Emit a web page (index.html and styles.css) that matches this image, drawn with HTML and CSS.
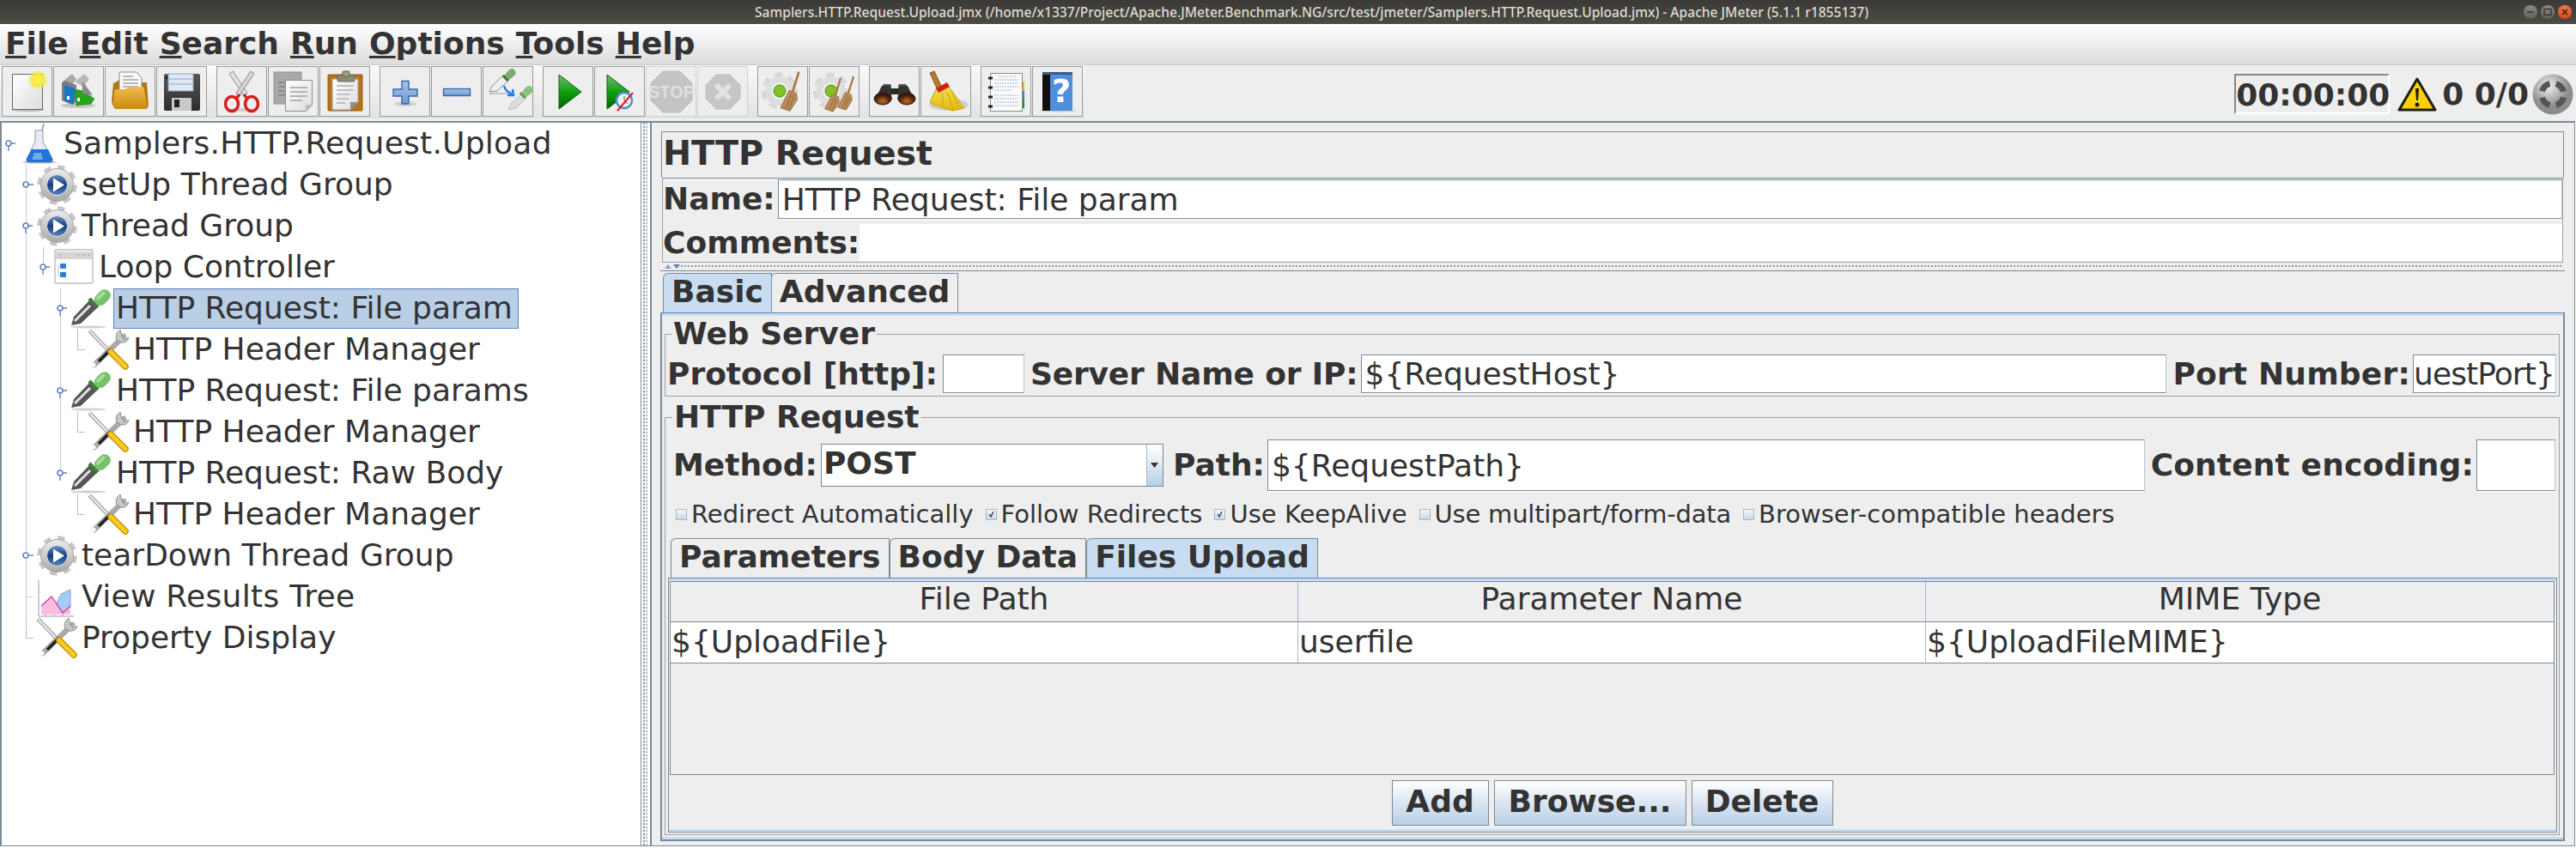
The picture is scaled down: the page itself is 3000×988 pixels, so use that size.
FILE: index.html
```html
<!DOCTYPE html>
<html lang="en">
<head>
  <meta charset="UTF-8">
  <title>Apache JMeter</title>
  <link rel="stylesheet" href="styles.css">
</head>
<body>
  <svg class="defs" width="0" height="0">
    <defs>
      <linearGradient id="gSilver" x1="0" y1="0" x2="0" y2="1"><stop offset="0" stop-color="#ececec"/><stop offset="1" stop-color="#a9a9a9"/></linearGradient>
      <linearGradient id="gNavy" x1="0" y1="0" x2="0" y2="1"><stop offset="0" stop-color="#6f93c4"/><stop offset=".5" stop-color="#123f7c"/><stop offset="1" stop-color="#5c86bd"/></linearGradient>
      <linearGradient id="gGreen" x1="0" y1="0" x2="0" y2="1"><stop offset="0" stop-color="#78b878"/><stop offset=".5" stop-color="#0fa00f"/><stop offset="1" stop-color="#046004"/></linearGradient>
      <linearGradient id="gPage" x1="0" y1="0" x2="1" y2="1"><stop offset="0" stop-color="#fff"/><stop offset="1" stop-color="#dcdcdc"/></linearGradient>
      <linearGradient id="gFolder" x1="0" y1="0" x2="0" y2="1"><stop offset="0" stop-color="#f2bb4c"/><stop offset="1" stop-color="#c98a12"/></linearGradient>
      <linearGradient id="gFloppy" x1="0" y1="0" x2="0" y2="1"><stop offset="0" stop-color="#555"/><stop offset="1" stop-color="#2e2e2e"/></linearGradient>
      <linearGradient id="gPlus" x1="0" y1="0" x2="0" y2="1"><stop offset="0" stop-color="#a8c6ea"/><stop offset="1" stop-color="#6d9ad2"/></linearGradient>
      <linearGradient id="gBristle" x1="0" y1="0" x2="0" y2="1"><stop offset="0" stop-color="#f7e25a"/><stop offset="1" stop-color="#e0b90e"/></linearGradient>
      <radialGradient id="gGlow"><stop offset="0" stop-color="#fff16a"/><stop offset=".55" stop-color="#f5e83c"/><stop offset="1" stop-color="#f5e83c" stop-opacity="0"/></radialGradient>
      <radialGradient id="gBall" cx=".4" cy=".3"><stop offset="0" stop-color="#f0f0f0"/><stop offset="1" stop-color="#8c8c8c"/></radialGradient>
      <radialGradient id="gLens" cx=".5" cy=".7"><stop offset="0" stop-color="#c86a24"/><stop offset="1" stop-color="#3a1a08"/></radialGradient>
    </defs>

    <symbol id="i-knob-open" viewBox="0 0 20 48">
      <path d="M10 27v6M13 24h5" fill="none" stroke="#6382bf" stroke-width="1.4"/>
      <circle cx="10" cy="24" r="3" fill="#fff" stroke="#6382bf" stroke-width="1.6"/>
    </symbol>
    <symbol id="i-knob-closed" viewBox="0 0 20 48">
      <path d="M13 24h6" fill="none" stroke="#6382bf" stroke-width="1.4"/>
      <circle cx="10" cy="24" r="3" fill="#fff" stroke="#6382bf" stroke-width="1.6"/>
    </symbol>

    <symbol id="i-flask" viewBox="0 0 47 47">
      <ellipse cx="23" cy="45" rx="20" ry="1.6" fill="#c4c4c4"/>
      <path d="M28 0l-3 11" stroke="#888" stroke-width="1.4"/>
      <path d="M18 8h9v13l11 20q1 4-3 4H11q-4 0-3-4l10-20z" fill="#e6ecf2" stroke="#8a97a5"/>
      <path d="M14 30h19l5 11q1 4-3 4H11q-4 0-3-4z" fill="#1f74d6"/>
      <path d="M17 34h8l2 8H14z" fill="#6aaaf0"/>
    </symbol>
    <symbol id="i-gear" viewBox="0 0 47 47">
      <circle cx="23.5" cy="23.5" r="20" fill="none" stroke="#c6c6c6" stroke-width="6.5" stroke-dasharray="8 7.7"/>
      <circle cx="23.5" cy="23.5" r="19" fill="url(#gSilver)" stroke="#a4a4a4"/>
      <circle cx="23.5" cy="23.5" r="12" fill="url(#gNavy)" stroke="#dfe5ec"/>
      <path d="M19 15.5l13 8-13 8z" fill="#fff"/>
    </symbol>
    <symbol id="i-loop" viewBox="0 0 47 47">
      <rect x="1" y="3" width="44" height="39" rx="2" fill="#fff" stroke="#bdbdbd" stroke-width="1.4"/>
      <rect x="2" y="5" width="42" height="9" fill="#d6d6d6"/>
      <path d="M6 8h3l-1.5 3zM27 8h3l-1.5 3zM33 8h3l-1.5 3zM39 8h3l-1.5 3z" fill="#b0b0b0"/>
      <path d="M5 20v14h3" fill="none" stroke="#c8c8c8"/>
      <rect x="7" y="19" width="7" height="6" rx="1" fill="#2e7fd8"/>
      <rect x="7" y="29" width="7" height="6" rx="1" fill="#2e7fd8"/>
    </symbol>
    <symbol id="i-dropper" viewBox="0 0 47 47">
      <ellipse cx="20" cy="45" rx="21" ry="1.5" fill="#cfcfcf"/>
      <path d="M0 43l3-10 20-21 9 9-21 20z" fill="#565656"/>
      <path d="M4 38L22 20" stroke="#e2e2e2" stroke-width="3"/>
      <path d="M21 12l10 10" stroke="#3f7f36" stroke-width="4.5"/>
      <g transform="rotate(-45 36 11)"><rect x="26" y="4" width="21" height="14" rx="7" fill="#78c06c"/><rect x="30" y="6" width="13" height="4" rx="2" fill="#a6dc98"/></g>
    </symbol>
    <symbol id="i-tools" viewBox="0 0 47 47">
      <path d="M1 1l24 25" stroke="#9c9c9c" stroke-width="4.5"/>
      <path d="M1 1l24 25" stroke="#f2f2f2" stroke-width="2"/>
      <path d="M41 8L7 41" stroke="#aaa" stroke-width="6.5" stroke-linecap="round"/>
      <path d="M26 23L12 37" stroke="#222" stroke-width="3.5"/>
      <path d="M37 0q-7 5-4 12l5 3q7 1 9-6l-5 3-3-4z" fill="#c8c8c8" stroke="#8f8f8f"/>
      <circle cx="6" cy="41" r="2.5" fill="#fff"/>
      <path d="M26 26l17 17" stroke="#c78f0a" stroke-width="7.5" stroke-linecap="round"/>
      <path d="M26 26l17 17" stroke="#f5cb1e" stroke-width="5" stroke-linecap="round"/>
    </symbol>
    <symbol id="i-chart" viewBox="0 0 47 47">
      <path d="M23 30l5-10 11-5v21l-9 8z" fill="#a8caf6" stroke="#7fa9e6"/>
      <path d="M5 44V34l12-11 13 19 9-8v10z" fill="#fabde0"/>
      <path d="M5 34l12-11 13 19 9-8" fill="none" stroke="#cf3a96" stroke-width="1.2"/>
      <path d="M2 4v42h41M10 44v2M20 44v2M30 44v2" fill="none" stroke="#9a9a9a"/>
    </symbol>
    <symbol id="i-broomlet" viewBox="0 0 30 52">
      <path d="M25 1l-8 26" stroke="#a97b45" stroke-width="3"/>
      <path d="M13 24l9 4 1 8-9 14-12-4z" fill="#b98c5a" stroke="#8c6434" stroke-width=".8"/>
      <path d="M16 28L9 47M19 30l-6 18" stroke="#8c6434"/>
    </symbol>
    <symbol id="i-cog" viewBox="0 0 57 57">
      <circle cx="25" cy="28" r="18" fill="none" stroke="#d8d8d8" stroke-width="7" stroke-dasharray="9 6.7"/>
      <circle cx="25" cy="28" r="17" fill="#dedede"/>
      <circle cx="25" cy="28" r="10" fill="#eee"/>
      <circle cx="25" cy="28" r="7" fill="#7fc41f" stroke="#4f8f12"/>
    </symbol>
  </svg>

  <div class="titlebar">
    <div class="title-text">Samplers.HTTP.Request.Upload.jmx (/home/x1337/Project/Apache.JMeter.Benchmark.NG/src/test/jmeter/Samplers.HTTP.Request.Upload.jmx) - Apache JMeter (5.1.1 r1855137)</div>
    <div class="win-btns">
      <span class="win-btn"><svg width="16" height="16" viewBox="0 0 16 16"><path d="M4 8h8" stroke="#2e2d29" stroke-width="1.2"/></svg></span>
      <span class="win-btn"><svg width="16" height="16" viewBox="0 0 16 16"><rect x="4" y="4.5" width="8" height="7" fill="none" stroke="#2e2d29" stroke-width="1.2"/></svg></span>
      <span class="win-btn close"><svg width="16" height="16" viewBox="0 0 16 16"><path d="M5 5l6 6M11 5l-6 6" stroke="#40160a" stroke-width="1.3"/></svg></span>
    </div>
  </div>

  <div class="menubar">
    <span><u>F</u>ile</span>
    <span><u>E</u>dit</span>
    <span><u>S</u>earch</span>
    <span><u>R</u>un</span>
    <span><u>O</u>ptions</span>
    <span><u>T</u>ools</span>
    <span><u>H</u>elp</span>
  </div>

  <div class="toolbar">
    <div class="tool-strip">
      <div class="tool-group">
        <div class="tool"><svg viewBox="0 0 57 57">
          <ellipse cx="29" cy="50" rx="19" ry="2" fill="#bbb"/>
          <rect x="11.5" y="8.5" width="35" height="41" fill="url(#gPage)" stroke="#666"/>
          <circle cx="41" cy="15" r="12" fill="url(#gGlow)"/>
        </svg></div>
        <div class="tool"><svg viewBox="0 0 57 57">
          <ellipse cx="28" cy="45" rx="20" ry="3" fill="#c6c6c6"/>
          <path d="M10 17l11-9 5 6-7 9z" fill="#a9a9a9"/><path d="M24 17l11-9 6 6-7 9z" fill="#b8b8b8"/>
          <path d="M9 18l4-2 13 5-1 20-4 3-12-5z" fill="#7d7d7d"/>
          <path d="M12 21l12 4-1 19-11-5z" fill="#1878c8"/>
          <path d="M24 26l9 2 14 9-4 6-17 2z" fill="#25a51a" stroke="#137a0c" stroke-width=".6"/>
          <path d="M33 17l4 5 8 11-12-2z" fill="#8a8a8a"/>
          <rect x="15" y="34" width="3" height="4" fill="#fff"/><rect x="27" y="36" width="3" height="4" fill="#fff"/>
        </svg></div>
        <div class="tool"><svg viewBox="0 0 57 57">
          <path d="M13 17l3-2h10l4 3h18l2 28-3 3H12q-4-2-5-10l2-20z" fill="#ad7a12"/>
          <path d="M16 6h20l6 7v15H16z" fill="#fafafa" stroke="#8d8d8d"/>
          <path d="M20 11h12M20 15h18M20 19h18M20 23h18" stroke="#7a7a7a"/>
          <path d="M10 30q0-4 4-4h6q4 0 6-2l18-1 5 24q0 2-3 2H12q-3-2-3-6z" fill="url(#gFolder)"/>
        </svg></div>
        <div class="tool"><svg viewBox="0 0 57 57">
          <path d="M8 10q0-2 2-2h38q2 0 2 2v39q0 2-2 2H10q-2 0-2-2z" fill="url(#gFloppy)"/>
          <rect x="13" y="8" width="29" height="20" fill="#dde8f4" stroke="#8fa3ba"/>
          <path d="M14 14h27M14 20h27" stroke="#88a6c8"/>
          <rect x="17" y="36" width="23" height="15" fill="#c9c9c9"/>
          <rect x="20" y="38" width="6" height="9" fill="#222"/>
          <rect x="10" y="11" width="2" height="3" fill="#111"/>
        </svg></div>
      </div>
      <div class="tool-group">
        <div class="tool"><svg viewBox="0 0 57 57">
          <ellipse cx="28" cy="50" rx="14" ry="2" fill="#cfcfcf"/>
          <path d="M14 8l15 22 2 4 4-3-2-4L18 5z" fill="#e4e4e4" stroke="#8a8a8a"/>
          <path d="M43 8L28 30l-2 4-4-3 2-4L39 5z" fill="#d4d4d4" stroke="#8a8a8a"/>
          <ellipse cx="17" cy="43" rx="7.5" ry="8.5" fill="none" stroke="#d81e1e" stroke-width="3.5"/>
          <ellipse cx="40" cy="43" rx="7.5" ry="8.5" fill="none" stroke="#d81e1e" stroke-width="3.5"/>
          <path d="M22 37l4-5M35 37l-4-5" stroke="#d81e1e" stroke-width="3.5"/>
        </svg></div>
        <div class="tool"><svg viewBox="0 0 57 57">
          <rect x="6" y="6" width="32" height="37" fill="#a9a9a9" stroke="#8d8d8d"/>
          <path d="M11 18h9M11 23h9M11 28h9M11 33h9" stroke="#8c8c8c" stroke-width="2"/>
          <path d="M19.5 15.5h31v29l-7 7h-24z" fill="url(#gPage)" stroke="#8e8e8e"/>
          <path d="M50 44h-7v7z" fill="#bbb"/>
          <path d="M25 24h20M25 29h20M25 34h20M25 39h14" stroke="#b4b4b4" stroke-width="2"/>
        </svg></div>
        <div class="tool"><svg viewBox="0 0 57 57">
          <rect x="9" y="9" width="40" height="42" rx="1" fill="#b5741c" stroke="#8b5610"/>
          <path d="M14 14h30v27l-9 9H14z" fill="url(#gPage)" stroke="#999"/>
          <path d="M44 41h-9v9z" fill="#8f8f8f"/>
          <path d="M19 22h20M19 27h20M19 32h16M19 37h14M19 42h10" stroke="#c0c0c0" stroke-width="2"/>
          <rect x="20" y="10" width="20" height="7" rx="1" fill="#8a8d72" stroke="#666"/>
          <rect x="26" y="5" width="8" height="6" rx="1" fill="#9a9d84" stroke="#666"/>
        </svg></div>
      </div>
      <div class="tool-group">
        <div class="tool"><svg viewBox="0 0 57 57">
          <ellipse cx="29" cy="43" rx="13" ry="3" fill="#d2d2d2"/>
          <path d="M25 16.5h8v9.5h10v8H33v9h-8v-9H15v-8h10z" fill="url(#gPlus)" stroke="#3a66a8" stroke-width="1.4"/>
        </svg></div>
        <div class="tool"><svg viewBox="0 0 57 57">
          <rect x="13.5" y="25.5" width="31" height="8" fill="url(#gPlus)" stroke="#3a66a8" stroke-width="1.4"/>
        </svg></div>
        <div class="tool"><svg viewBox="0 0 57 57">
          <path d="M7 29l3-7 14-13 6 6-14 13z" fill="#eee" stroke="#8d8d8d"/>
          <path d="M23 10l6 6" stroke="#3f7f36" stroke-width="3.5"/>
          <g transform="rotate(-45 31 8)"><rect x="25" y="4" width="13" height="9" rx="4.5" fill="#78ae6c"/></g>
          <path d="M7 31h25" stroke="#b5b5b5" stroke-width="1.5"/>
          <path d="M24 22q2 7 9 9M28 33l7 0-1-7" fill="none" stroke="#1f7cf0" stroke-width="2.5"/>
          <path d="M29 50l3-7 13-12 5 5-12 12z" fill="#ddd" stroke="#bbb"/>
          <path d="M43 30l6 6" stroke="#5f9f55" stroke-width="3.5"/>
          <g transform="rotate(-45 51 28)"><rect x="45" y="24" width="13" height="9" rx="4.5" fill="#8cc080"/></g>
        </svg></div>
      </div>
      <div class="tool-group">
        <div class="tool"><svg viewBox="0 0 57 57">
          <path d="M18 9l26 20-26 20z" fill="url(#gGreen)" stroke="#0a5c0a"/>
        </svg></div>
        <div class="tool"><svg viewBox="0 0 57 57">
          <path d="M14 9l26 20-26 20z" fill="url(#gGreen)" stroke="#0a5c0a"/>
          <circle cx="34" cy="39" r="9" fill="#f2f2f2" stroke="#4f8fcf" stroke-width="2.5"/>
          <path d="M34 39v-5M34 39l4 4" stroke="#555"/>
          <path d="M26 51l18-21" stroke="#e8141c" stroke-width="2"/>
        </svg></div>
        <div class="tool off"><svg viewBox="0 0 57 57">
          <path d="M19 5h20l14 14v20L39 53H19L5 39V19z" fill="#c4c4c4" stroke="#bbb"/>
          <text class="stop-text" x="29" y="36" text-anchor="middle">STOP</text>
        </svg></div>
        <div class="tool off"><svg viewBox="0 0 57 57">
          <path d="M21 9h16l12 12v16L37 49H21L9 37V21z" fill="#c6c6c6" stroke="#bdbdbd"/>
          <path d="M21 21l16 16M37 21L21 37" stroke="#e2e2e2" stroke-width="6"/>
        </svg></div>
      </div>
      <div class="tool-group">
        <div class="tool"><svg viewBox="0 0 57 57">
          <use href="#i-cog" width="57" height="57"/>
          <use href="#i-broomlet" x="24" y="4" width="28" height="50"/>
        </svg></div>
        <div class="tool"><svg viewBox="0 0 57 57">
          <use href="#i-cog" width="57" height="57"/>
          <use href="#i-broomlet" x="16" y="12" width="24" height="42"/>
          <use href="#i-broomlet" x="31" y="10" width="24" height="42"/>
        </svg></div>
      </div>
      <div class="tool-group">
        <div class="tool"><svg viewBox="0 0 57 57">
          <rect x="15" y="20" width="10" height="12" rx="2" fill="#555"/><rect x="33" y="20" width="10" height="12" rx="2" fill="#555"/>
          <rect x="23" y="25" width="12" height="7" fill="#2a2a2a"/>
          <path d="M7 36l7-14h9l3 16z" fill="#333"/><path d="M51 36l-7-14h-9l-3 16z" fill="#333"/>
          <ellipse cx="15" cy="37" rx="10" ry="7" fill="url(#gLens)" stroke="#222"/>
          <ellipse cx="43" cy="37" rx="10" ry="7" fill="url(#gLens)" stroke="#222"/>
        </svg></div>
        <div class="tool"><svg viewBox="0 0 57 57">
          <ellipse cx="32" cy="44" rx="23" ry="7" fill="#cfcfcf"/>
          <path d="M10 7l5-2 9 19-5 3z" fill="#b87a2c" stroke="#7f5114"/>
          <path d="M17 26l12-7 5 7 16 22-14 3-22-7-4-3z" fill="url(#gBristle)" stroke="#c9a20c"/>
          <path d="M17 25l13-7 3 5-13 7z" fill="#cf1f24"/>
          <path d="M24 31l2 15M30 29l7 20M35 28l9 19" stroke="#c9a20c"/>
        </svg></div>
      </div>
      <div class="tool-group">
        <div class="tool"><svg viewBox="0 0 57 57">
          <path d="M47 17h3v11h-3z" fill="#f2b90f"/><path d="M47 28h3v11h-3z" fill="#3f7fd8"/><path d="M47 38h3v10h-3z" fill="#1e9a1e"/>
          <rect x="10.5" y="7.5" width="37" height="44" fill="#fbfbfb" stroke="#8a8a8a"/>
          <path d="M20 11h20M15 15h28M15 19h28M15 23h28M15 27h20M15 33h28M15 37h28M15 41h28M15 45h28" stroke="#9bb0d0" stroke-dasharray="2 1"/>
          <path d="M8 13h5M8 24h5M8 35h5M8 46h5" stroke="#222" stroke-width="3"/>
        </svg></div>
        <div class="tool"><svg viewBox="0 0 57 57">
          <ellipse cx="29" cy="51" rx="22" ry="1.5" fill="#c9c9c9"/>
          <rect x="11" y="6" width="35" height="45" rx="1" fill="#4f8fdc"/>
          <rect x="11" y="6" width="9" height="45" fill="#101010"/>
          <rect x="11" y="6" width="35" height="3" fill="#3c5c80"/>
          <text class="help-text" x="33" y="41" text-anchor="middle">?</text>
        </svg></div>
      </div>
    </div>
    <div class="status">
      <div class="timer">00:00:00</div>
      <svg class="warn-icon" width="46" height="42" viewBox="0 0 46 42">
        <path d="M23 3L2 39h42z" fill="#fdd000" stroke="#1c1c1c" stroke-width="3" stroke-linejoin="round"/>
        <path d="M21 14h4l-1 14h-2z" fill="#1c1c1c"/><circle cx="23" cy="33" r="2.5" fill="#1c1c1c"/>
      </svg>
      <span class="counts">0 0/0</span>
      <svg class="ball-icon" width="48" height="48" viewBox="0 0 48 48">
        <circle cx="24" cy="24" r="23.5" fill="url(#gBall)"/>
        <circle cx="24" cy="24" r="13" fill="none" stroke="#555" stroke-width="7" stroke-dasharray="13 7.4" stroke-dashoffset="-3.5"/>
      </svg>
    </div>
  </div>

  <div class="workspace">
    <div class="tree-pane">
      <div class="tree-row">
        <span class="g"><svg class="knob"><use href="#i-knob-open"/></svg></span>
        <svg class="node-icon"><use href="#i-flask"/></svg>
        <span class="node-label root-label">Samplers.HTTP.Request.Upload</span>
      </div>
      <div class="tree-row">
        <span class="g"></span><span class="g g-tee"><svg class="knob"><use href="#i-knob-closed"/></svg></span>
        <svg class="node-icon"><use href="#i-gear"/></svg>
        <span class="node-label">setUp Thread Group</span>
      </div>
      <div class="tree-row">
        <span class="g"></span><span class="g g-line"><svg class="knob"><use href="#i-knob-open"/></svg></span>
        <svg class="node-icon"><use href="#i-gear"/></svg>
        <span class="node-label">Thread Group</span>
      </div>
      <div class="tree-row">
        <span class="g"></span><span class="g g-line"></span><span class="g g-top"><svg class="knob"><use href="#i-knob-open"/></svg></span>
        <svg class="node-icon"><use href="#i-loop"/></svg>
        <span class="node-label">Loop Controller</span>
      </div>
      <div class="tree-row">
        <span class="g"></span><span class="g g-line"></span><span class="g"></span><span class="g g-line"><svg class="knob"><use href="#i-knob-open"/></svg></span>
        <svg class="node-icon"><use href="#i-dropper"/></svg>
        <span class="node-label selected">HTTP Request: File param</span>
      </div>
      <div class="tree-row">
        <span class="g"></span><span class="g g-line"></span><span class="g"></span><span class="g g-line"></span><span class="g g-end"></span>
        <svg class="node-icon"><use href="#i-tools"/></svg>
        <span class="node-label">HTTP Header Manager</span>
      </div>
      <div class="tree-row">
        <span class="g"></span><span class="g g-line"></span><span class="g"></span><span class="g g-line"><svg class="knob"><use href="#i-knob-open"/></svg></span>
        <svg class="node-icon"><use href="#i-dropper"/></svg>
        <span class="node-label">HTTP Request: File params</span>
      </div>
      <div class="tree-row">
        <span class="g"></span><span class="g g-line"></span><span class="g"></span><span class="g g-line"></span><span class="g g-end"></span>
        <svg class="node-icon"><use href="#i-tools"/></svg>
        <span class="node-label">HTTP Header Manager</span>
      </div>
      <div class="tree-row">
        <span class="g"></span><span class="g g-line"></span><span class="g"></span><span class="g g-top"><svg class="knob"><use href="#i-knob-open"/></svg></span>
        <svg class="node-icon"><use href="#i-dropper"/></svg>
        <span class="node-label">HTTP Request: Raw Body</span>
      </div>
      <div class="tree-row">
        <span class="g"></span><span class="g g-line"></span><span class="g"></span><span class="g"></span><span class="g g-end"></span>
        <svg class="node-icon"><use href="#i-tools"/></svg>
        <span class="node-label">HTTP Header Manager</span>
      </div>
      <div class="tree-row">
        <span class="g"></span><span class="g g-line"><svg class="knob"><use href="#i-knob-closed"/></svg></span>
        <svg class="node-icon"><use href="#i-gear"/></svg>
        <span class="node-label">tearDown Thread Group</span>
      </div>
      <div class="tree-row">
        <span class="g"></span><span class="g g-tee"></span>
        <svg class="node-icon"><use href="#i-chart"/></svg>
        <span class="node-label view-label">View Results Tree</span>
      </div>
      <div class="tree-row">
        <span class="g"></span><span class="g g-end"></span>
        <svg class="node-icon"><use href="#i-tools"/></svg>
        <span class="node-label">Property Display</span>
      </div>
    </div>

    <div class="split-v"></div>

    <div class="editor">
      <div class="head-box"><h1>HTTP Request</h1></div>
      <div class="name-box">
        <div class="name-row">
          <span class="lbl">Name:</span>
          <div class="field grow">HTTP Request: File param</div>
        </div>
        <div class="name-row comments">
          <span class="lbl">Comments:</span>
          <div class="memo"></div>
        </div>
      </div>

      <div class="split-h">
        <svg width="22" height="9" viewBox="0 0 22 9"><path d="M3 7l4-5 4 5z" fill="#8aa4c8"/><path d="M13 2h8l-4 5z" fill="#5f7fb8"/></svg>
        <div class="dots"></div>
      </div>

      <div class="tabs-top">
        <div class="tab-strip main-tabs">
          <span class="tab on">Basic</span>
          <span class="tab">Advanced</span>
        </div>
        <div class="tab-panel">
          <fieldset class="group">
            <legend>Web Server</legend>
            <div class="form-row server-row">
              <span class="lbl">Protocol [http]:</span>
              <div class="field w-proto"></div>
              <span class="lbl lbl-server">Server Name or IP:</span>
              <div class="field grow">${RequestHost}</div>
              <span class="lbl lbl-port">Port Number:</span>
              <div class="field w-port">uestPort}</div>
            </div>
          </fieldset>

          <fieldset class="group request-group">
            <legend>HTTP Request</legend>
            <div class="form-row method-row">
              <span class="lbl">Method:</span>
              <div class="combo">
                <span class="combo-value">POST</span>
                <span class="combo-btn"><svg width="9" height="6" viewBox="0 0 9 6"><path d="M0 0h9L4.5 6z" fill="#333"/></svg></span>
              </div>
              <span class="lbl">Path:</span>
              <div class="field grow">${RequestPath}</div>
              <span class="lbl lbl-enc">Content encoding:</span>
              <div class="field w-enc"></div>
            </div>
            <div class="check-row">
              <span class="check"><span class="box"></span>Redirect Automatically</span>
              <span class="check"><span class="box"><svg width="11" height="11" viewBox="0 0 11 11"><path d="M3 5l2 3 3-6" fill="none" stroke="#333" stroke-width="1.3"/></svg></span>Follow Redirects</span>
              <span class="check"><span class="box"><svg width="11" height="11" viewBox="0 0 11 11"><path d="M3 5l2 3 3-6" fill="none" stroke="#333" stroke-width="1.3"/></svg></span>Use KeepAlive</span>
              <span class="check tight"><span class="box"></span>Use multipart/form-data</span>
              <span class="check"><span class="box"></span>Browser-compatible headers</span>
            </div>
            <div class="tab-strip sub-tabs">
              <span class="tab">Parameters</span>
              <span class="tab">Body Data</span>
              <span class="tab on">Files Upload</span>
            </div>
            <div class="sub-panel">
              <div class="file-table">
                <div class="th">File Path</div>
                <div class="th">Parameter Name</div>
                <div class="th">MIME Type</div>
                <div class="td">${UploadFile}</div>
                <div class="td">userfile</div>
                <div class="td">${UploadFileMIME}</div>
              </div>
              <div class="btn-row">
                <span class="btn w-add">Add</span>
                <span class="btn w-browse">Browse...</span>
                <span class="btn w-delete">Delete</span>
              </div>
            </div>
          </fieldset>
        </div>
      </div>
    </div>
  </div>
</body>
</html>
```

FILE: styles.css
```css
* { box-sizing: border-box; }
html, body { margin: 0; }
body {
  width: 3000px;
  height: 988px;
  overflow: hidden;
  background: #fff;
  color: #333;
  font-family: "DejaVu Sans", sans-serif;
  font-size: 36px;
}
.defs { display: block; height: 0; }

/* window title */
.titlebar {
  height: 28px;
  display: flex;
  align-items: center;
  background: linear-gradient(#3b3a36, #4c4b46);
}
.title-text {
  flex: 1;
  padding-left: 116px;
  text-align: center;
  color: #dfdbd2;
  font-family: "Noto Sans", sans-serif;
  font-size: 15.6px;
  font-weight: 500;
  white-space: nowrap;
}
.win-btns {
  display: flex;
  gap: 4px;
  padding-right: 5px;
}
.win-btn {
  width: 16px;
  height: 16px;
  border-radius: 50%;
  background: linear-gradient(#8a8984, #5f5e59);
  display: block;
}
.win-btn svg { display: block; }
.win-btn.close { background: linear-gradient(#f0784a, #d9481c); }

/* menu */
.menubar {
  height: 48px;
  display: flex;
  align-items: center;
  gap: 13px;
  padding: 0 0 2px 6px;
  background: linear-gradient(#fff, #dcdcdc);
  border-bottom: 1px solid #c9c9c9;
  font-weight: bold;
  line-height: 1;
}

/* toolbar */
.toolbar {
  height: 65px;
  display: flex;
  align-items: flex-start;
  background: #eee;
}
.tool-strip {
  display: flex;
  gap: 11px;
  padding: 1px 2px 2px;
  background: linear-gradient(#fafafa, #e2e2e2);
}
.tool-group { display: flex; gap: 1px; }
.tool {
  width: 59px;
  height: 59px;
  border: 1px solid #999;
  background: #eee;
}
.tool svg { display: block; width: 57px; height: 57px; }
.tool.off { border-color: #d2d2d2; }
.stop-text { font-family: "Liberation Sans", sans-serif; font-size: 20px; font-weight: bold; fill: #e0e0e0; }
.help-text { font-family: "DejaVu Sans", sans-serif; font-size: 38px; font-weight: bold; fill: #fff; }

.status {
  margin-left: auto;
  height: 65px;
  display: flex;
  align-items: center;
  padding: 2px 3px 0 0;
  font-weight: bold;
}
.timer {
  width: 181px;
  height: 47px;
  line-height: 45px;
  text-align: center;
  white-space: nowrap;
  border: 2px solid;
  border-color: #888 #fff #fff #888;
}
.warn-icon { margin-left: 9px; }
.counts { margin: 0 4px 0 6px; white-space: nowrap; }

/* main area */
.workspace {
  height: 845px;
  display: flex;
}
.tree-pane {
  width: 747px;
  flex: none;
  background: #fff;
  border: 2px solid #7a8a99;
  border-width: 2px 1px 1px 2px;
}
.split-v {
  width: 10px;
  flex: none;
  padding: 0 3px 0 2px;
  background-color: #eee;
  background-image: radial-gradient(circle at 1px 1px, #8a9aa9 1px, transparent 1px);
  background-size: 4px 4px;
  background-clip: content-box;
  background-origin: content-box;
  border-top: 2px solid #7a8a99;
  border-bottom: 1px solid #7a8a99;
}

/* tree */
.tree-row {
  height: 48px;
  display: flex;
  align-items: center;
  margin-left: -2px;
  white-space: nowrap;
}
.g {
  width: 20px;
  height: 48px;
  flex: none;
  background-repeat: no-repeat;
}
.g-line {
  background-image: linear-gradient(#b8cfe5, #b8cfe5);
  background-position: 10px 0;
  background-size: 1px 100%;
}
.g-top {
  background-image: linear-gradient(#b8cfe5, #b8cfe5);
  background-position: 10px 0;
  background-size: 1px 50%;
}
.g-tee {
  background-image: linear-gradient(#b8cfe5, #b8cfe5), linear-gradient(#b8cfe5, #b8cfe5);
  background-position: 10px 0, 10px 24px;
  background-size: 1px 100%, 9px 1px;
}
.g-end {
  background-image: linear-gradient(#a9c0d8, #a9c0d8), linear-gradient(#a9c0d8, #a9c0d8);
  background-position: 10px 0, 10px 24px;
  background-size: 1px 25px, 9px 1px;
}
.knob { display: block; width: 20px; height: 48px; }
.node-icon { width: 47px; height: 47px; flex: none; margin-left: 3px; }
.node-label {
  height: 47px;
  line-height: 44px;
  padding: 0 2px;
  border: 1px solid transparent;
  margin-left: 2px;
}
.root-label { letter-spacing: .25px; margin-left: 1px; }
.view-label { letter-spacing: .3px; }
.node-label.selected {
  background: #b8cfe5;
  border-color: #6382bf;
  padding-right: 6px;
}

/* editor side */
.editor {
  flex: 1;
  min-width: 0;
  margin-right: 1px;
  border: 1px solid #7a8a99;
  border-width: 2px 1px 1px 2px;
  padding: 10px 11px 5px 10px;
  background: #eee;
  display: flex;
  flex-direction: column;
}
.head-box {
  height: 54px;
  margin: 0 1px;
  border: 1px solid #7a8a99;
  border-bottom: 0;
}
h1 {
  margin: 0;
  padding-left: 1px;
  font-size: 39.6px;
  line-height: 48px;
}
.lbl { font-weight: bold; white-space: nowrap; flex: none; }
.name-box {
  height: 99px;
  margin: 0 2px;
  border: 1px solid #a0a0a0;
  border-top: 1px solid #7a8a99;
  padding: 1px 0 0 0;
  display: flex;
  flex-direction: column;
  gap: 6px;
}
.name-row {
  height: 46px;
  display: flex;
  align-items: center;
  gap: 3px;
}
.name-row .lbl { line-height: 44px; }
.name-row.comments { height: 43px; gap: 0; }
.memo { flex: 1; height: 43px; background: #fff; }
.field {
  height: 100%;
  display: flex;
  align-items: center;
  padding-left: 4px;
  background: #fff;
  border: 1px solid #7a8a99;
  border-right-color: #b8c4cf;
  box-shadow: 0 1px 0 #fff;
  white-space: nowrap;
  overflow: hidden;
}
.grow { flex: 1; min-width: 0; }

.split-h {
  height: 9px;
  flex: none;
  margin: 0 2px;
  display: flex;
  align-items: center;
}
.split-h svg { flex: none; }
.dots {
  flex: 1;
  height: 4px;
  background-image: radial-gradient(circle at 1px 1px, #8a9aa9 1px, transparent 1px);
  background-size: 4px 4px;
}

/* tabs */
.tabs-top {
  flex: 1;
  min-height: 0;
  border-top: 1px solid #7a8a99;
  padding-top: 2px;
  display: flex;
  flex-direction: column;
}
.tab-strip {
  height: 46px;
  flex: none;
  display: flex;
  margin-left: 3px;
}
.tab {
  padding: 0 9px;
  line-height: 42px;
  font-weight: bold;
  white-space: nowrap;
  border: 1px solid #7a8a99;
  border-bottom: 0;
  border-radius: 6px 0 0 0;
  margin-right: -1px;
}
.tab.on { background: #c8ddf2; }
.tab-panel {
  flex: 1;
  min-height: 0;
  border: 1px solid #7a8a99;
  border-width: 1px 2px 2px 2px;
  border-top-color: #6382bf;
  padding: 4px 4px 5px 3px;
  background:
    linear-gradient(#c8ddf2, #c8ddf2) top / 100% 3px no-repeat,
    linear-gradient(#c8ddf2, #c8ddf2) bottom / 100% 3px no-repeat;
  display: flex;
  flex-direction: column;
}

/* titled boxes */
.group {
  margin: 0;
  min-width: 0;
  border: 1px solid #a0a0a0;
  padding: 4px 3px 3px 2px;
}
.group legend {
  margin-left: 5px;
  padding: 0 2px;
  font-weight: bold;
  line-height: 40px;
  height: 40px;
}
.request-group {
  margin-top: 4px;
  flex: 1;
  min-height: 0;
  padding: 6px 2px 2px 3px;
  display: flex;
  flex-direction: column;
}
.form-row {
  display: flex;
  align-items: center;
}
.server-row { height: 45px; }
.method-row { height: 60px; flex: none; margin: 0 2px 0 6px; }
.form-row .lbl { line-height: 40px; }
.form-row .lbl + .field { margin-left: 3px; }
.form-row .lbl + .combo { margin-left: 4px; }
.form-row .field + .lbl { margin-left: 7px; }
.form-row .combo + .lbl { margin-left: 11px; }
.lbl-server { letter-spacing: -.15px; }
.lbl-port { letter-spacing: .2px; }
.lbl-enc { letter-spacing: .15px; }
.form-row .lbl + .w-proto { width: 95px; flex: none; margin-left: 6px; }
.w-port {
  width: 167px;
  flex: none;
  justify-content: flex-end;
  padding: 0 1px 0 0;
  letter-spacing: -.9px;
}
.w-enc { width: 92px; flex: none; }

.combo {
  width: 399px;
  height: 50px;
  flex: none;
  display: flex;
  background: #fff;
  border: 1px solid #7a8a99;
}
.combo-value { flex: 1; font-weight: bold; padding-left: 2px; line-height: 44px; }
.combo-btn {
  width: 19px;
  display: flex;
  align-items: center;
  justify-content: center;
  background: linear-gradient(#fff, #dde8f3 50%, #b8cfe5);
  border-left: 1px solid #a3b8cc;
}

.check-row {
  height: 38px;
  flex: none;
  margin: 8px 0 9px 9px;
  display: flex;
  align-items: center;
  gap: 14px;
  font-size: 29px;
  white-space: nowrap;
}
.check { display: flex; align-items: center; gap: 5px; line-height: 34px; }
.check.tight { letter-spacing: -.2px; }
.box {
  width: 13px;
  height: 13px;
  flex: none;
  border: 1px solid #a3b8cc;
  background: linear-gradient(#f4f8fc, #c8d8e8);
}
.box svg { display: block; }

.sub-tabs { margin-left: 3px; }
.sub-tabs .tab { margin-right: 0; }
.sub-panel {
  flex: 1;
  min-height: 0;
  border: 1px solid #7a8a99;
  border-top-color: #6382bf;
  padding: 3px 2px 7px 1px;
  background:
    linear-gradient(#c8ddf2, #c8ddf2) top / 100% 3px no-repeat,
    linear-gradient(#c8ddf2, #c8ddf2) bottom / 100% 3px no-repeat;
  display: flex;
  flex-direction: column;
}

/* table */
.file-table {
  height: 226px;
  flex: none;
  display: grid;
  grid-template-columns: repeat(3, 1fr);
  grid-template-rows: 47px 48px;
  border: 1px solid #7a8a99;
}
.th, .td {
  border-bottom: 1px solid #7a8a99;
  border-right: 1px solid #a3b8cc;
  white-space: nowrap;
  overflow: hidden;
}
.th { text-align: center; line-height: 40px; }
.td { background: #fff; padding-left: 1px; line-height: 45px; }
.th:nth-child(3), .td:nth-child(6) { border-right: 0; }

.btn-row {
  margin-top: 6px;
  display: flex;
  justify-content: center;
  gap: 6px;
}
.btn {
  height: 53px;
  line-height: 48px;
  text-align: center;
  font-weight: bold;
  white-space: nowrap;
  border: 1px solid #7a8a99;
  background: linear-gradient(#fff, #dde8f3 45%, #b8cfe5);
}
.w-add { width: 113px; }
.w-browse { width: 224px; }
.w-delete { width: 165px; }
```
